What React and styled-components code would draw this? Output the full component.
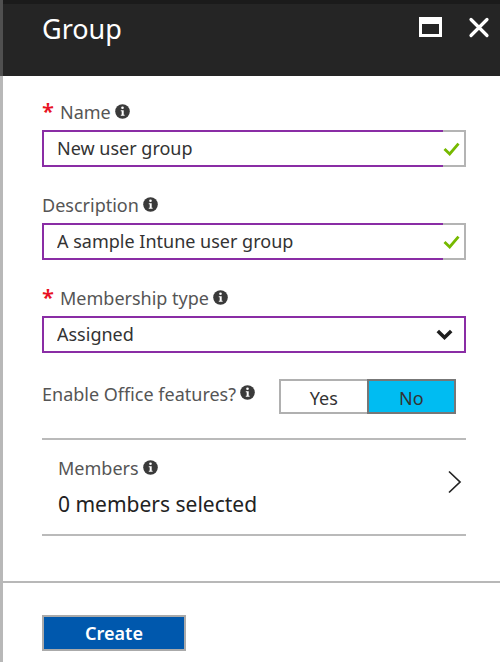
import React, { useState } from "react";
import styled, { createGlobalStyle } from "styled-components";

const GlobalStyle = createGlobalStyle`
  * { box-sizing: border-box; }
  body {
    margin: 0;
    background: #fff;
    color: #333;
    font-family: "Segoe UI", "Noto Sans", "Open Sans", sans-serif;
    font-size: 18px;
    line-height: 24px;
  }
  button, input, select { font: inherit; color: inherit; }
`;

const Blade = styled.div`
  display: flex;
  flex-direction: column;
  min-height: 100vh;
  border-left: 3px solid #b8b8b8;
`;

const Header = styled.header`
  display: flex;
  align-items: flex-start;
  justify-content: space-between;
  height: 76px;
  padding: 7px 10px 0 39px;
  background: #252525;
  box-shadow: -3px 0 #505050, inset 0 4px #1b1b1b;
  padding-top: 11px;
  color: #fff;
`;

const Title = styled.h1`
  margin: 0;
  font-size: 27px;
  font-weight: 400;
  line-height: 36px;
`;

const WindowActions = styled.div`
  display: flex;
  gap: 25px;
  padding-top: 5px;
`;

const IconButton = styled.button`
  display: flex;
  padding: 0;
  border: 0;
  background: none;
  color: #fff;
`;

const Form = styled.form`
  display: flex;
  flex: 1;
  flex-direction: column;
`;

const Fields = styled.div`
  display: flex;
  flex-direction: column;
  gap: 20px;
  padding: 18px 34px 0 39px;
`;

const Field = styled.div`
  display: flex;
  flex-direction: column;
`;

const LabelRow = styled.div`
  display: flex;
  align-items: center;
  gap: 4px;
  height: 36px;
  color: #555;
  & > svg { margin-bottom: 2px; }
`;

const Required = styled.span`
  width: 14px;
  padding-bottom: 4px;
  color: #e81123;
  font-size: 22px;
  font-weight: 600;
`;

const InputRow = styled.div`
  display: flex;
  height: 37px;
`;

const TextInput = styled.input`
  flex: 1;
  min-width: 0;
  padding: 0 0 1px 13px;
  border: 2px solid #8a2da5;
  border-right: 0;
  border-radius: 0;
  background: #fff;
  outline: 0;
`;

const Status = styled.span`
  display: flex;
  align-items: center;
  width: 23px;
  border: 2px solid #b4b4b4;
  border-left: 0;
`;

const SelectBox = styled.div`
  display: grid;
  align-items: center;
  height: 37px;
  border: 2px solid #8a2da5;
  & > * { grid-area: 1 / 1; }
  & > svg { justify-self: end; margin-right: 11px; pointer-events: none; }
`;

const Select = styled.select`
  width: 100%;
  height: 100%;
  padding: 0 40px 1px 13px;
  border: 0;
  appearance: none;
  background: #fff;
  outline: 0;
`;

const ToggleRow = styled.div`
  display: flex;
  align-items: center;
  gap: 24px;
  margin-top: 6px;
`;

const ToggleLabel = styled(LabelRow)`
  height: 35px;
  padding-bottom: 6px;
  white-space: nowrap;
`;

const Toggle = styled.div`
  display: flex;
  flex: 0 1 177px;
  height: 35px;
`;

const Option = styled.label`
  display: flex;
  flex: 1;
  align-items: center;
  justify-content: center;
  padding-top: 2px;
  border: 2px solid #b0b0b0;
  border-right-width: 0;
  &:has(input:checked) {
    border: 2px solid #777;
    background: #00bcf2;
  }
  &:last-child { border-right-width: 2px; }
  input {
    width: 0;
    height: 0;
    margin: 0;
    appearance: none;
    outline: 0;
  }
`;

const Members = styled.button`
  display: flex;
  align-items: flex-start;
  justify-content: space-between;
  margin-top: 4px;
  padding: 9px 4px 12px 16px;
  border: solid #bababa;
  border-width: 2px 0;
  background: none;
  text-align: left;
`;

const MembersLabel = styled(LabelRow)`
  height: 38px;
`;

const MembersValue = styled.div`
  color: #222;
  font-size: 21px;
  line-height: 35px;
`;

const ChevronIcon = styled.svg`
  margin-top: 21px;
`;

const Footer = styled.footer`
  margin-top: 45px;
  padding: 32px 39px 11px;
  border-top: 2px solid #b8b8b8;
`;

const CreateButton = styled.button`
  width: 144px;
  height: 36px;
  padding: 0;
  border: 2px solid #aaa;
  background: #0058ad;
  color: #fff;
  font-weight: 600;
`;

const InfoIcon = () => (
  <svg width="15" height="15" viewBox="0 0 15 15" aria-hidden="true">
    <circle cx="7.5" cy="7.5" r="7.3" fill="#3a3a3a" />
    <circle cx="7.5" cy="3.8" r="1.3" fill="#fff" />
    <path d="M5.8 6.2h2.9v4.6h.9v1H5.8v-1h.9V7.2h-.9z" fill="#fff" />
  </svg>
);

const CheckIcon = () => (
  <svg width="17" height="14" viewBox="0 0 17 14" aria-hidden="true">
    <path d="M1.5 7l5.2 5L15.5 1.7" fill="none" stroke="#76b900" strokeWidth="2.8" />
  </svg>
);

const TextField = ({ id, label, required, initial }) => {
  const [value, setValue] = useState(initial);
  return (
    <Field>
      <LabelRow>
        {required && <Required>*</Required>}
        <label htmlFor={id}>{label}</label>
        <InfoIcon />
      </LabelRow>
      <InputRow>
        <TextInput id={id} type="text" value={value} required={required} onChange={(e) => setValue(e.target.value)} />
        <Status><CheckIcon /></Status>
      </InputRow>
    </Field>
  );
};

export default function App() {
  const [office, setOffice] = useState("No");
  return (
    <>
      <GlobalStyle />
      <Blade>
        <Header>
          <Title>Group</Title>
          <WindowActions>
            <IconButton type="button" aria-label="Maximize">
              <svg width="25" height="24" viewBox="0 0 25 24" aria-hidden="true">
                <path fillRule="evenodd" d="M1 1h23v20H1zM4 8v10h17V8z" fill="#fff" />
              </svg>
            </IconButton>
            <IconButton type="button" aria-label="Close">
              <svg width="22" height="24" viewBox="0 0 22 24" aria-hidden="true">
                <path d="M3 3.5l16 16M19 3.5l-16 16" stroke="#fff" strokeWidth="3.2" strokeLinecap="round" />
              </svg>
            </IconButton>
          </WindowActions>
        </Header>
        <Form onSubmit={(e) => e.preventDefault()}>
          <Fields>
            <TextField id="name" label="Name" required initial="New user group" />
            <TextField id="description" label="Description" initial="A sample Intune user group" />
            <Field>
              <LabelRow>
                <Required>*</Required>
                <label htmlFor="membership">Membership type</label>
                <InfoIcon />
              </LabelRow>
              <SelectBox>
                <Select id="membership" defaultValue="Assigned">
                  <option>Assigned</option>
                </Select>
                <svg width="17" height="12" viewBox="0 0 17 12" aria-hidden="true">
                  <path d="M1.8 2l6.7 6.5L15.2 2" fill="none" stroke="#1e1e1e" strokeWidth="3.6" />
                </svg>
              </SelectBox>
            </Field>
            <ToggleRow role="radiogroup" aria-labelledby="office-label">
              <ToggleLabel>
                <span id="office-label">Enable Office features?</span>
                <InfoIcon />
              </ToggleLabel>
              <Toggle>
                {["Yes", "No"].map((name) => (
                  <Option key={name}>
                    <input type="radio" name="office" checked={office === name} onChange={() => setOffice(name)} />
                    {name}
                  </Option>
                ))}
              </Toggle>
            </ToggleRow>
            <Members type="button">
              <div>
                <MembersLabel>
                  Members
                  <InfoIcon />
                </MembersLabel>
                <MembersValue>0 members selected</MembersValue>
              </div>
              <ChevronIcon width="15" height="24" viewBox="0 0 15 24" aria-hidden="true">
                <path d="M2 1.5l11 10.5L2 22.5" fill="none" stroke="#222" strokeWidth="1.7" />
              </ChevronIcon>
            </Members>
          </Fields>
          <Footer>
            <CreateButton type="submit">Create</CreateButton>
          </Footer>
        </Form>
      </Blade>
    </>
  );
}
